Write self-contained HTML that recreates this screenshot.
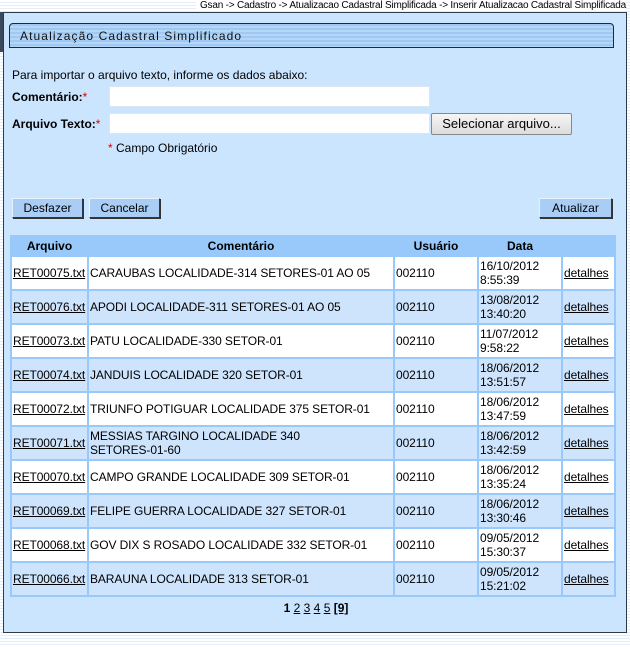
<!DOCTYPE html>
<html><head><meta charset="utf-8"><style>
*{box-sizing:border-box}
body{margin:0;width:630px;height:647px;overflow:hidden;font-family:"Liberation Sans",Arial,sans-serif;font-size:12px;color:#000;background:#fff repeating-linear-gradient(#fff 0 2px,#e3eefa 2px 3px);position:relative}
.bc{position:absolute;right:4px;top:0;font-size:10px;background:#fff;padding-left:4px;line-height:11px;letter-spacing:-.2px}
.leftbar{position:absolute;left:0;top:12px;width:3px;height:40px;background:#3a4a5a}
.panel{position:absolute;left:3px;top:12px;width:624px;height:621px;background:#cbe5ff;border:1px solid #2c3a4a}
.title{position:absolute;left:5px;top:10px;width:605px;height:25px;border:1px solid #1c2a3a;border-radius:4px 4px 0 0;background:repeating-linear-gradient(#9fc8f2 0 2px,#b6d6f7 2px 4px);font-size:12px;letter-spacing:1.1px;padding:5px 0 0 10px;color:#111}
.lbl{position:absolute;font-size:12px}
.r{color:#d00}
.inp{position:absolute;background:#fff;border:1px solid #dde6ee;height:21px}
.btn{position:absolute;background:#a9cdf5;border:1px solid #2c3a4a;border-top-color:#e8f2fc;border-left-color:#e8f2fc;height:20px;font-size:12px;text-align:center;line-height:18px;box-shadow:1px 1px 0 #333}
.sel{position:absolute;left:427px;top:100px;width:141px;height:22px;border:1px solid #888;border-radius:2px;background:linear-gradient(#f6f6f6,#dcdcdc);font-size:13px;text-align:center;line-height:20px}
table{position:absolute;left:6px;top:222px;width:604px;border-spacing:2px;background:#99c9fa;table-layout:fixed}
th{height:18px;font-weight:bold;background:#99c9fa;padding:0;font-size:12px}
td{height:32px;padding:0 1px;font-size:12px;line-height:14px;vertical-align:middle;overflow:hidden;white-space:nowrap;letter-spacing:-.1px}
tr.w td{background:#fff}
tr.b td{background:#cde4fc}
td.c{white-space:normal}
a{color:#000;text-decoration:underline}
.pg{position:absolute;left:0;width:624px;top:588px;text-align:center;font-size:12px}
</style></head><body>
<div class="bc">Gsan -&gt; Cadastro -&gt; Atualizacao Cadastral Simplificada -&gt; Inserir Atualizacao Cadastral Simplificada</div>
<div class="leftbar"></div>
<div class="panel">
<div class="title">Atualização Cadastral Simplificado</div>
<div class="lbl" style="left:8px;top:55px">Para importar o arquivo texto, informe os dados abaixo:</div>
<div class="lbl" style="left:8px;top:77px"><b>Comentário:</b><span class="r">*</span></div>
<div class="inp" style="left:105px;top:73px;width:321px"></div>
<div class="lbl" style="left:8px;top:104px"><b>Arquivo Texto:</b><span class="r">*</span></div>
<div class="inp" style="left:105px;top:100px;width:321px"></div>
<div class="sel">Selecionar arquivo...</div>
<div class="lbl" style="left:104px;top:128px"><span class="r">*</span> Campo Obrigatório</div>
<div class="btn" style="left:8px;top:185px;width:71px">Desfazer</div>
<div class="btn" style="left:85px;top:185px;width:71px">Cancelar</div>
<div class="btn" style="left:535px;top:185px;width:73px">Atualizar</div>
<table>
<colgroup><col style="width:75px"><col style="width:304px"><col style="width:82px"><col style="width:82px"><col style="width:51px"></colgroup>
<tr><th>Arquivo</th><th>Comentário</th><th>Usuário</th><th>Data</th><th></th></tr>
<tr class="w"><td><a>RET00075.txt</a></td><td>CARAUBAS LOCALIDADE-314 SETORES-01 AO 05</td><td>002110</td><td class="c">16/10/2012<br>8:55:39</td><td><a>detalhes</a></td></tr>
<tr class="b"><td><a>RET00076.txt</a></td><td>APODI LOCALIDADE-311 SETORES-01 AO 05</td><td>002110</td><td class="c">13/08/2012<br>13:40:20</td><td><a>detalhes</a></td></tr>
<tr class="w"><td><a>RET00073.txt</a></td><td>PATU LOCALIDADE-330 SETOR-01</td><td>002110</td><td class="c">11/07/2012<br>9:58:22</td><td><a>detalhes</a></td></tr>
<tr class="b"><td><a>RET00074.txt</a></td><td>JANDUIS LOCALIDADE 320 SETOR-01</td><td>002110</td><td class="c">18/06/2012<br>13:51:57</td><td><a>detalhes</a></td></tr>
<tr class="w"><td><a>RET00072.txt</a></td><td>TRIUNFO POTIGUAR LOCALIDADE 375 SETOR-01</td><td>002110</td><td class="c">18/06/2012<br>13:47:59</td><td><a>detalhes</a></td></tr>
<tr class="b"><td><a>RET00071.txt</a></td><td class="c">MESSIAS TARGINO LOCALIDADE 340<br>SETORES-01-60</td><td>002110</td><td class="c">18/06/2012<br>13:42:59</td><td><a>detalhes</a></td></tr>
<tr class="w"><td><a>RET00070.txt</a></td><td>CAMPO GRANDE LOCALIDADE 309 SETOR-01</td><td>002110</td><td class="c">18/06/2012<br>13:35:24</td><td><a>detalhes</a></td></tr>
<tr class="b"><td><a>RET00069.txt</a></td><td>FELIPE GUERRA LOCALIDADE 327 SETOR-01</td><td>002110</td><td class="c">18/06/2012<br>13:30:46</td><td><a>detalhes</a></td></tr>
<tr class="w"><td><a>RET00068.txt</a></td><td>GOV DIX S ROSADO LOCALIDADE 332 SETOR-01</td><td>002110</td><td class="c">09/05/2012<br>15:30:37</td><td><a>detalhes</a></td></tr>
<tr class="b"><td><a>RET00066.txt</a></td><td>BARAUNA LOCALIDADE 313 SETOR-01</td><td>002110</td><td class="c">09/05/2012<br>15:21:02</td><td><a>detalhes</a></td></tr>
</table>
<div class="pg"><b>1</b> <a>2</a> <a>3</a> <a>4</a> <a>5</a> <a><b>[9]</b></a></div>
</div>
</body></html>
